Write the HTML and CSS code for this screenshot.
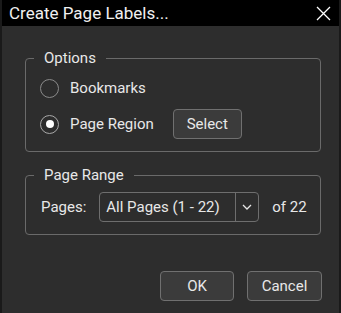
FILE: index.html
```html
<!DOCTYPE html>
<html lang="en">
<head>
    <meta charset="UTF-8">
    <title>Create Page Labels...</title>
    <link rel="stylesheet" href="styles.css">
</head>
<body>
    <div class="dialog">
        <div class="titlebar">
            <span class="title">Create Page Labels...</span>
            <svg class="close" width="15" height="15" viewBox="0 0 15 15">
                <path d="M1 1 L14 14 M14 1 L1 14" stroke="#ffffff" stroke-width="1.3" fill="none"/>
            </svg>
        </div>

        <div class="content">
            <div class="group group-options">
                <span class="legend">Options</span>
                <div class="row">
                    <span class="radio"></span>
                    <span class="label">Bookmarks</span>
                </div>
                <div class="row">
                    <span class="radio checked"></span>
                    <span class="label">Page Region</span>
                    <button class="btn btn-select">Select</button>
                </div>
            </div>

            <div class="group group-range">
                <span class="legend">Page Range</span>
                <div class="row">
                    <span class="pages-label">Pages:</span>
                    <div class="combo">
                        <span class="combo-value">All Pages (1 - 22)</span>
                        <span class="combo-arrow">
                            <svg width="10" height="6" viewBox="0 0 10 6">
                                <path d="M1 1 L5 5 L9 1" stroke="#e6e6e6" stroke-width="1.3" fill="none"/>
                            </svg>
                        </span>
                    </div>
                    <span class="of-total">of 22</span>
                </div>
            </div>

            <div class="actions">
                <button class="btn btn-ok">OK</button>
                <button class="btn btn-cancel">Cancel</button>
            </div>
        </div>
    </div>
</body>
</html>
```

FILE: styles.css
```css
html, body {
    margin: 0;
    padding: 0;
}
body {
    font-family: Roboto, "Liberation Sans", sans-serif;
    font-size: 15px;
    color: #e8e8e8;
    background-color: #2d2d2d;
}
.dialog {
    width: 341px;
    height: 313px;
    box-sizing: border-box;
    border-left: 2px solid #1a1a1a;
    border-right: 2px solid #1a1a1a;
    background-color: #2d2d2d;
}
.titlebar {
    height: 26px;
    background-color: #000000;
    display: flex;
    align-items: center;
    justify-content: space-between;
    padding: 0 8px 0 7px;
}
.title {
    font-size: 17px;
    color: #f0f0f0;
}
.close {
    display: block;
}
.content {
    padding: 32px 18px 0 23px;
}
.group {
    position: relative;
    border: 1px solid #6a6a6a;
    border-radius: 4px;
    padding: 0 8px 0 14px;
}
.legend {
    position: absolute;
    top: -10px;
    left: 8px;
    padding: 0 10px;
    line-height: 18px;
    background-color: #2d2d2d;
}
.group-options {
    padding-top: 14px;
    padding-bottom: 12px;
    display: flex;
    flex-direction: column;
    gap: 6px;
}
.row {
    display: flex;
    align-items: center;
    height: 30px;
    white-space: nowrap;
}
.radio {
    width: 17px;
    height: 17px;
    border: 1px solid #8a8a8a;
    border-radius: 50%;
    display: flex;
    align-items: center;
    justify-content: center;
    margin-right: 11px;
}
.radio.checked {
    border-color: #a8a8a8;
}
.radio.checked::after {
    content: "";
    width: 8px;
    height: 8px;
    border-radius: 50%;
    background-color: #ffffff;
}
.btn {
    font-family: inherit;
    font-size: 15px;
    color: #e8e8e8;
    background-color: #3b3b3b;
    border: 1px solid #707070;
    border-radius: 4px;
    height: 30px;
    padding: 0;
}
.btn-select {
    width: 69px;
    margin-left: 19px;
}
.group-range {
    margin-top: 23px;
    padding-top: 16px;
    padding-bottom: 12px;
}
.pages-label {
    margin-left: 1px;
}
.combo {
    display: flex;
    flex-shrink: 0;
    width: 160px;
    height: 30px;
    box-sizing: border-box;
    border: 1px solid #6e6e6e;
    border-radius: 4px;
    margin-left: 13px;
}
.combo-value {
    flex: 1;
    display: flex;
    align-items: center;
    padding-left: 6px;
}
.combo-arrow {
    width: 22px;
    border-left: 1px solid #6e6e6e;
    display: flex;
    align-items: center;
    justify-content: center;
}
.of-total {
    margin-left: 13px;
}
.actions {
    display: flex;
    justify-content: flex-end;
    gap: 13px;
    margin-top: 36px;
    margin-right: -1px;
}
.btn-ok {
    width: 74px;
}
.btn-cancel {
    width: 75px;
}
```
